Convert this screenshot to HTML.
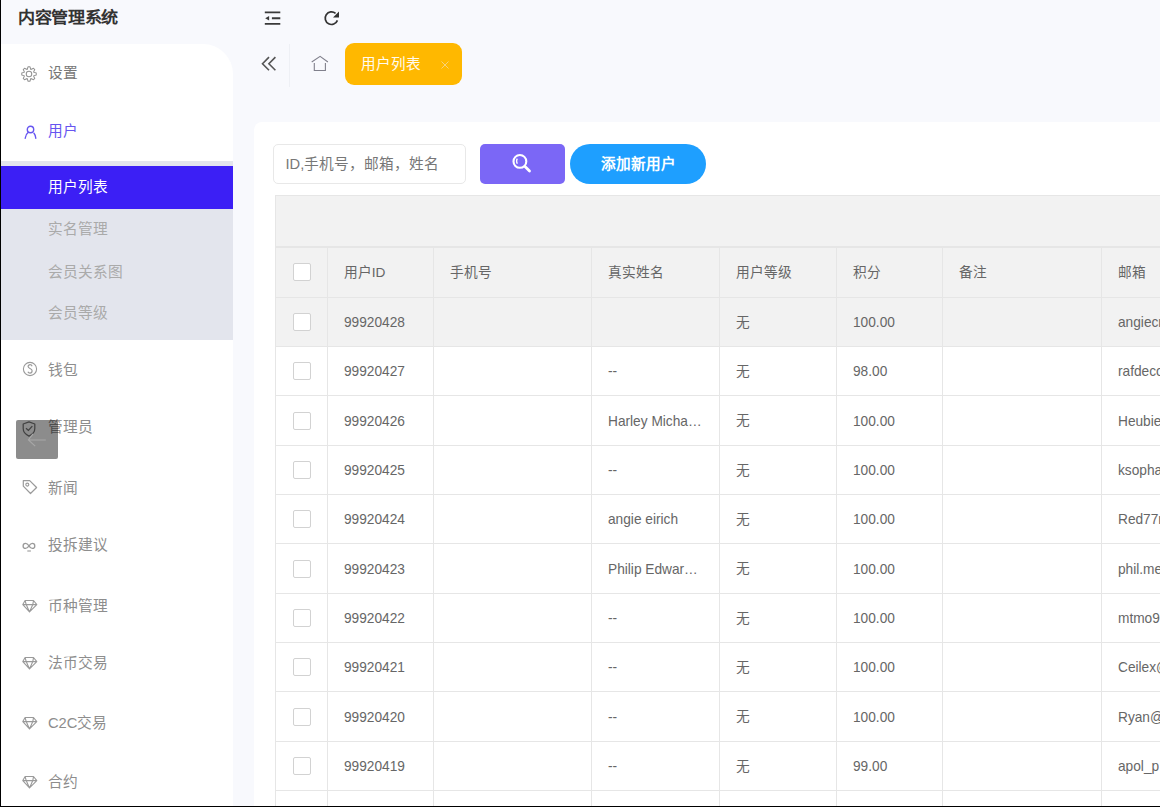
<!DOCTYPE html>
<html lang="zh-CN"><head><meta charset="utf-8"><style>
*{margin:0;padding:0;box-sizing:border-box}
html,body{width:1160px;height:807px;overflow:hidden;background:#f8f9fd;font-family:"Liberation Sans",sans-serif;position:relative}
.a{position:absolute}
.t{position:absolute;white-space:nowrap;line-height:1}
</style></head><body>

<div class="t" style="left:17.6px;top:7.7px;transform:scaleX(1.04);transform-origin:0 0;font-size:16.4px;font-weight:bold;color:#333;line-height:18px">内容管理系统</div>
<div class="a" style="left:1px;top:44.3px;width:232px;height:770px;background:#fff;border-top-right-radius:30px"></div>
<div class="a" style="left:1px;top:161.2px;width:232px;height:178.8px;background:#e3e5ed"></div>
<div class="a" style="left:1px;top:166.1px;width:232px;height:42.7px;background:#3c1ff5"></div>
<div class="t" style="left:48.3px;top:178px;font-size:14.7px;line-height:18px;color:#fff">用户列表</div>
<div class="t" style="left:48.3px;top:220.2px;font-size:14.7px;line-height:18px;color:#aaa">实名管理</div>
<div class="t" style="left:48.3px;top:262.8px;font-size:14.7px;line-height:18px;color:#aaa">会员关系图</div>
<div class="t" style="left:48.3px;top:304px;font-size:14.7px;line-height:18px;color:#aaa">会员等级</div>
<div class="a" style="left:21.2px;top:65.85px;width:16px;height:16px;line-height:0"><svg width="16" height="16" viewBox="0 0 16 16"><path d="M7.11,0.75 L8.89,0.75 L9.88,3.47 L12.49,2.25 L13.75,3.51 L12.53,6.12 L15.25,7.11 L15.25,8.89 L12.53,9.88 L13.75,12.49 L12.49,13.75 L9.88,12.53 L8.89,15.25 L7.11,15.25 L6.12,12.53 L3.51,13.75 L2.25,12.49 L3.47,9.88 L0.75,8.89 L0.75,7.11 L3.47,6.12 L2.25,3.51 L3.51,2.25 L6.12,3.47Z" fill="none" stroke="#949494" stroke-width="1.05" stroke-linejoin="round"/><circle cx="8" cy="8" r="2.75" fill="none" stroke="#949494" stroke-width="1.05"/></svg></div>
<div class="t" style="left:47.9px;top:63.5px;font-size:14.7px;line-height:18px;color:#777">设置</div>
<div class="a" style="left:23.5px;top:124.5px;width:14px;height:14px;line-height:0"><svg width="14" height="14" viewBox="0 0 14 14"><circle cx="6.5" cy="4.5" r="3.2" fill="none" stroke="#6655f0" stroke-width="1.4"/><path d="M4.3 7.3C2.7 8.5 1.5 10.5 1.2 13.3M10 8.3c1 1.2 1.6 3 1.8 5" fill="none" stroke="#6655f0" stroke-width="1.4" stroke-linecap="round"/></svg></div>
<div class="t" style="left:47.9px;top:122.19999999999999px;font-size:14.7px;line-height:18px;color:#6655f0">用户</div>
<div class="a" style="left:21.5px;top:361.4px;width:16px;height:16px;line-height:0"><svg width="16" height="16" viewBox="0 0 16 16"><circle cx="8" cy="8" r="6.6" fill="none" stroke="#9a9a9a" stroke-width="1.1"/><path d="M10.1 5.2c-.3-.9-1.1-1.5-2-1.5-1.1 0-2 .8-2 1.9 0 2.2 4 1.6 4 4.2 0 1.2-.9 2.3-2.1 2.3-1 0-1.8-.6-2.1-1.4" fill="none" stroke="#9a9a9a" stroke-width="1.2"/></svg></div>
<div class="t" style="left:47.9px;top:361px;font-size:14.7px;line-height:18px;color:#8d8d8d">钱包</div>
<div class="a" style="left:22px;top:420.8px;width:14px;height:16px;line-height:0"><svg width="14" height="16" viewBox="0 0 14 16"><path d="M7 .9l5.8 2.1v4.6c0 3.3-2.4 6-5.8 7.5C3.6 13.6 1.2 10.9 1.2 7.6V3z" fill="none" stroke="#777" stroke-width="1.25" stroke-linejoin="round"/><path d="M4 7.3l2.4 2.1 3.9-4.3" fill="none" stroke="#777" stroke-width="1.35"/></svg></div>
<div class="t" style="left:47.9px;top:418.2px;font-size:14.7px;line-height:18px;color:#8d8d8d">管理员</div>
<div class="a" style="left:21.5px;top:478.8px;width:16px;height:16px;line-height:0"><svg width="16" height="16" viewBox="0 0 16 16"><path d="M1.3 1.6h6.4l6.9 6.9-6.1 6-7.2-7.3z" fill="none" stroke="#9a9a9a" stroke-width="1.2" stroke-linejoin="round"/><circle cx="5.3" cy="5.6" r="1.5" fill="none" stroke="#9a9a9a" stroke-width="1.1"/></svg></div>
<div class="t" style="left:47.9px;top:478.5px;font-size:14.7px;line-height:18px;color:#8d8d8d">新闻</div>
<div class="a" style="left:22px;top:541.5px;width:14px;height:10px;line-height:0"><svg width="14" height="10" viewBox="0 0 14 10"><path d="M7 3.8C5.9 2.3 4.9 1.4 3.6 1.4 2.2 1.4 1.1 2.5 1.1 3.9s1.1 2.5 2.5 2.5c1.3 0 2.3-.9 3.4-2.5S8.9 1.4 10.3 1.4c1.4 0 2.5 1.1 2.5 2.5s-1.1 2.5-2.5 2.5C9 6.4 8 5.5 7 3.8z" fill="none" stroke="#9a9a9a" stroke-width="1.3"/><path d="M5.3 9h3.6" stroke="#9a9a9a" stroke-width="1.1"/></svg></div>
<div class="t" style="left:47.9px;top:535.5px;font-size:14.7px;line-height:18px;color:#8d8d8d">投拆建议</div>
<div class="a" style="left:22px;top:598.6px;width:16px;height:16px;line-height:0"><svg width="16" height="16" viewBox="0 0 16 16"><path d="M3.1 1.5h8.4l3.3 4.1L7.5 12.9.8 5.6z M.8 5.6h14 M3.1 1.5 4.2 5.6 7.5 12.9 10.8 5.6 11.5 1.5" fill="none" stroke="#9a9a9a" stroke-width="1.1" stroke-linejoin="round"/></svg></div>
<div class="t" style="left:47.9px;top:596.6px;font-size:14.7px;line-height:18px;color:#8d8d8d">币种管理</div>
<div class="a" style="left:22px;top:655.8px;width:16px;height:16px;line-height:0"><svg width="16" height="16" viewBox="0 0 16 16"><path d="M3.1 1.5h8.4l3.3 4.1L7.5 12.9.8 5.6z M.8 5.6h14 M3.1 1.5 4.2 5.6 7.5 12.9 10.8 5.6 11.5 1.5" fill="none" stroke="#9a9a9a" stroke-width="1.1" stroke-linejoin="round"/></svg></div>
<div class="t" style="left:47.9px;top:653.8px;font-size:14.7px;line-height:18px;color:#8d8d8d">法币交易</div>
<div class="a" style="left:22px;top:715.5px;width:16px;height:16px;line-height:0"><svg width="16" height="16" viewBox="0 0 16 16"><path d="M3.1 1.5h8.4l3.3 4.1L7.5 12.9.8 5.6z M.8 5.6h14 M3.1 1.5 4.2 5.6 7.5 12.9 10.8 5.6 11.5 1.5" fill="none" stroke="#9a9a9a" stroke-width="1.1" stroke-linejoin="round"/></svg></div>
<div class="t" style="left:47.9px;top:713.5px;font-size:14.7px;line-height:18px;color:#8d8d8d">C2C交易</div>
<div class="a" style="left:22px;top:775.2px;width:16px;height:16px;line-height:0"><svg width="16" height="16" viewBox="0 0 16 16"><path d="M3.1 1.5h8.4l3.3 4.1L7.5 12.9.8 5.6z M.8 5.6h14 M3.1 1.5 4.2 5.6 7.5 12.9 10.8 5.6 11.5 1.5" fill="none" stroke="#9a9a9a" stroke-width="1.1" stroke-linejoin="round"/></svg></div>
<div class="t" style="left:47.9px;top:773.2px;font-size:14.7px;line-height:18px;color:#8d8d8d">合约</div>
<div class="a" style="left:16px;top:420.3px;width:42px;height:38.5px;background:rgba(0,0,0,.45);border-radius:2px"></div>
<svg class="a" style="left:12px;top:414px" width="50" height="50" viewBox="0 0 50 50"><path d="M33.8 26H16.6M21 19.8 16.4 26l6.8 6.2" fill="none" stroke="#a8a8a8" stroke-width="1.1"/></svg>
<div class="a" style="left:0;top:0;width:1px;height:807px;background:#000"></div>
<svg class="a" style="left:264px;top:11px" width="17" height="15" viewBox="0 0 17 15"><path d="M0.8 1.45h15.5M7.9 7.25h8.4M0.8 12.9h15.5" stroke="#3a3a3a" stroke-width="1.8"/><path d="M1.2 7.25l3.9-2.2v4.4z" fill="#3a3a3a"/></svg>
<svg class="a" style="left:323px;top:10px" width="18" height="18" viewBox="0 0 18 18"><path d="M14.4 10.35A6.3 6.3 0 1 1 12.55 3.37" fill="none" stroke="#333" stroke-width="1.7"/><path d="M16 1.6v6H10z" fill="#333"/></svg>
<svg class="a" style="left:256px;top:50px" width="28" height="28" viewBox="0 0 28 28"><path d="M13 7.1 6.5 13.7 13 20.3M19.4 7.1 12.9 13.7 19.4 20.3" fill="none" stroke="#555" stroke-width="1.6"/></svg>
<div class="a" style="left:289px;top:44px;width:1px;height:43px;background:#eef0f5"></div>
<svg class="a" style="left:306px;top:50px" width="28" height="28" viewBox="0 0 28 28"><path d="M5.7 12 14.1 6.4 21.9 12M8.3 13v7.5h11.1V13" fill="none" stroke="#80808c" stroke-width="1.1"/></svg>
<div class="a" style="left:344.7px;top:43.1px;width:117px;height:42px;background:#ffb800;border-radius:9px"></div>
<div class="t" style="left:361.4px;top:54.5px;font-size:14.6px;line-height:18px;color:#fffbf0">用户列表</div>
<svg class="a" style="left:441px;top:61px" width="8" height="8" viewBox="0 0 8 8"><path d="M.5.5l7 7M7.5.5l-7 7" stroke="#f7d27a" stroke-width="1"/></svg>
<div class="a" style="left:253.6px;top:121.8px;width:1000px;height:800px;background:#fff;border-radius:8px"></div>
<div class="a" style="left:273.2px;top:144.4px;width:193px;height:39.4px;border:1px solid #e8e8e8;border-radius:5px;background:#fff"></div>
<div class="t" style="left:285.5px;top:155px;font-size:14.7px;line-height:18px;color:#777">ID,手机号，邮箱，姓名</div>
<div class="a" style="left:480.3px;top:144.4px;width:85.2px;height:39.6px;background:#7b67f6;border-radius:5px"></div>
<svg class="a" style="left:505px;top:148px" width="30" height="30" viewBox="0 0 30 30"><circle cx="14.9" cy="13.4" r="6.4" fill="none" stroke="#fff" stroke-width="2.1"/><path d="M20 18.6 24.5 23" stroke="#fff" stroke-width="2.8" stroke-linecap="round"/><path d="M12.3 10.6c-.9 1.3-.9 3.4 0 5.2" fill="none" stroke="#fff" stroke-width="1.3"/></svg>
<div class="a" style="left:569.7px;top:144.4px;width:136.3px;height:39.6px;background:#1e9fff;border-radius:20px"></div>
<div class="t" style="left:601px;top:154.5px;font-size:14.6px;line-height:18px;color:#fff;font-weight:bold">添加新用户</div>
<div class="a" style="left:275.4px;top:195.1px;width:1000px;height:52px;background:#f2f2f2;border:1px solid #e6e6e6;border-right:none"></div>
<div class="a" style="left:275.4px;top:247.1px;width:1000px;height:50.20000000000002px;background:#f2f2f2"></div>
<div class="a" style="left:275.4px;top:297.3px;width:1000px;height:49.33px;background:#f2f2f2"></div>
<div class="a" style="left:275.4px;top:246.60px;width:1000px;height:1px;background:#e6e6e6"></div>
<div class="a" style="left:275.4px;top:296.80px;width:1000px;height:1px;background:#e6e6e6"></div>
<div class="a" style="left:275.4px;top:346.13px;width:1000px;height:1px;background:#e6e6e6"></div>
<div class="a" style="left:275.4px;top:395.46px;width:1000px;height:1px;background:#e6e6e6"></div>
<div class="a" style="left:275.4px;top:444.79px;width:1000px;height:1px;background:#e6e6e6"></div>
<div class="a" style="left:275.4px;top:494.12px;width:1000px;height:1px;background:#e6e6e6"></div>
<div class="a" style="left:275.4px;top:543.45px;width:1000px;height:1px;background:#e6e6e6"></div>
<div class="a" style="left:275.4px;top:592.78px;width:1000px;height:1px;background:#e6e6e6"></div>
<div class="a" style="left:275.4px;top:642.11px;width:1000px;height:1px;background:#e6e6e6"></div>
<div class="a" style="left:275.4px;top:691.44px;width:1000px;height:1px;background:#e6e6e6"></div>
<div class="a" style="left:275.4px;top:740.77px;width:1000px;height:1px;background:#e6e6e6"></div>
<div class="a" style="left:275.4px;top:790.10px;width:1000px;height:1px;background:#e6e6e6"></div>
<div class="a" style="left:275.4px;top:839.43px;width:1000px;height:1px;background:#e6e6e6"></div>
<div class="a" style="left:274.90px;top:247.1px;width:1px;height:700px;background:#e6e6e6"></div>
<div class="a" style="left:326.90px;top:247.1px;width:1px;height:700px;background:#e6e6e6"></div>
<div class="a" style="left:432.70px;top:247.1px;width:1px;height:700px;background:#e6e6e6"></div>
<div class="a" style="left:591.10px;top:247.1px;width:1px;height:700px;background:#e6e6e6"></div>
<div class="a" style="left:718.80px;top:247.1px;width:1px;height:700px;background:#e6e6e6"></div>
<div class="a" style="left:836.00px;top:247.1px;width:1px;height:700px;background:#e6e6e6"></div>
<div class="a" style="left:942.20px;top:247.1px;width:1px;height:700px;background:#e6e6e6"></div>
<div class="a" style="left:1101.30px;top:247.1px;width:1px;height:700px;background:#e6e6e6"></div>
<div class="a" style="left:292.5px;top:263.2px;width:18px;height:18px;border:1px solid #d2d2d2;border-radius:2px;background:#fff"></div>
<div class="t" style="left:343.70px;top:263.70px;font-size:13.7px;line-height:18px;color:#666">用户ID</div>
<div class="t" style="left:449.50px;top:263.70px;font-size:13.7px;line-height:18px;color:#666">手机号</div>
<div class="t" style="left:607.90px;top:263.70px;font-size:13.7px;line-height:18px;color:#666">真实姓名</div>
<div class="t" style="left:735.60px;top:263.70px;font-size:13.7px;line-height:18px;color:#666">用户等级</div>
<div class="t" style="left:852.80px;top:263.70px;font-size:13.7px;line-height:18px;color:#666">积分</div>
<div class="t" style="left:959.00px;top:263.70px;font-size:13.7px;line-height:18px;color:#666">备注</div>
<div class="t" style="left:1118.10px;top:263.70px;font-size:13.7px;line-height:18px;color:#666">邮箱</div>
<div class="a" style="left:292.5px;top:312.96500000000003px;width:18px;height:18px;border:1px solid #d2d2d2;border-radius:2px;background:#fff"></div>
<div class="t" style="left:343.70px;top:312.87px;font-size:15.0px;line-height:18px;color:#666;transform:scaleX(0.913);transform-origin:0 50%">99920428</div>
<div class="t" style="left:735.60px;top:313.57px;font-size:13.7px;line-height:18px;color:#666">无</div>
<div class="t" style="left:852.80px;top:312.87px;font-size:15.0px;line-height:18px;color:#666;transform:scaleX(0.913);transform-origin:0 50%">100.00</div>
<div class="t" style="left:1118.10px;top:312.87px;font-size:15.0px;line-height:18px;color:#666;transform:scaleX(0.913);transform-origin:0 50%">angiecr</div>
<div class="a" style="left:292.5px;top:362.295px;width:18px;height:18px;border:1px solid #d2d2d2;border-radius:2px;background:#fff"></div>
<div class="t" style="left:343.70px;top:362.19px;font-size:15.0px;line-height:18px;color:#666;transform:scaleX(0.913);transform-origin:0 50%">99920427</div>
<div class="t" style="left:607.90px;top:362.19px;font-size:15.0px;line-height:18px;color:#666;transform:scaleX(0.913);transform-origin:0 50%">--</div>
<div class="t" style="left:735.60px;top:362.90px;font-size:13.7px;line-height:18px;color:#666">无</div>
<div class="t" style="left:852.80px;top:362.19px;font-size:15.0px;line-height:18px;color:#666;transform:scaleX(0.913);transform-origin:0 50%">98.00</div>
<div class="t" style="left:1118.10px;top:362.19px;font-size:15.0px;line-height:18px;color:#666;transform:scaleX(0.913);transform-origin:0 50%">rafdeco</div>
<div class="a" style="left:292.5px;top:411.62500000000006px;width:18px;height:18px;border:1px solid #d2d2d2;border-radius:2px;background:#fff"></div>
<div class="t" style="left:343.70px;top:411.53px;font-size:15.0px;line-height:18px;color:#666;transform:scaleX(0.913);transform-origin:0 50%">99920426</div>
<div class="t" style="left:607.90px;top:411.53px;font-size:15.0px;line-height:18px;color:#666;transform:scaleX(0.913);transform-origin:0 50%">Harley Micha…</div>
<div class="t" style="left:735.60px;top:412.23px;font-size:13.7px;line-height:18px;color:#666">无</div>
<div class="t" style="left:852.80px;top:411.53px;font-size:15.0px;line-height:18px;color:#666;transform:scaleX(0.913);transform-origin:0 50%">100.00</div>
<div class="t" style="left:1118.10px;top:411.53px;font-size:15.0px;line-height:18px;color:#666;transform:scaleX(0.913);transform-origin:0 50%">Heubie</div>
<div class="a" style="left:292.5px;top:460.95500000000004px;width:18px;height:18px;border:1px solid #d2d2d2;border-radius:2px;background:#fff"></div>
<div class="t" style="left:343.70px;top:460.86px;font-size:15.0px;line-height:18px;color:#666;transform:scaleX(0.913);transform-origin:0 50%">99920425</div>
<div class="t" style="left:607.90px;top:460.86px;font-size:15.0px;line-height:18px;color:#666;transform:scaleX(0.913);transform-origin:0 50%">--</div>
<div class="t" style="left:735.60px;top:461.56px;font-size:13.7px;line-height:18px;color:#666">无</div>
<div class="t" style="left:852.80px;top:460.86px;font-size:15.0px;line-height:18px;color:#666;transform:scaleX(0.913);transform-origin:0 50%">100.00</div>
<div class="t" style="left:1118.10px;top:460.86px;font-size:15.0px;line-height:18px;color:#666;transform:scaleX(0.913);transform-origin:0 50%">ksopha</div>
<div class="a" style="left:292.5px;top:510.28499999999997px;width:18px;height:18px;border:1px solid #d2d2d2;border-radius:2px;background:#fff"></div>
<div class="t" style="left:343.70px;top:510.18px;font-size:15.0px;line-height:18px;color:#666;transform:scaleX(0.913);transform-origin:0 50%">99920424</div>
<div class="t" style="left:607.90px;top:510.18px;font-size:15.0px;line-height:18px;color:#666;transform:scaleX(0.913);transform-origin:0 50%">angie eirich</div>
<div class="t" style="left:735.60px;top:510.88px;font-size:13.7px;line-height:18px;color:#666">无</div>
<div class="t" style="left:852.80px;top:510.18px;font-size:15.0px;line-height:18px;color:#666;transform:scaleX(0.913);transform-origin:0 50%">100.00</div>
<div class="t" style="left:1118.10px;top:510.18px;font-size:15.0px;line-height:18px;color:#666;transform:scaleX(0.913);transform-origin:0 50%">Red77r</div>
<div class="a" style="left:292.5px;top:559.615px;width:18px;height:18px;border:1px solid #d2d2d2;border-radius:2px;background:#fff"></div>
<div class="t" style="left:343.70px;top:559.51px;font-size:15.0px;line-height:18px;color:#666;transform:scaleX(0.913);transform-origin:0 50%">99920423</div>
<div class="t" style="left:607.90px;top:559.51px;font-size:15.0px;line-height:18px;color:#666;transform:scaleX(0.913);transform-origin:0 50%">Philip Edwar…</div>
<div class="t" style="left:735.60px;top:560.22px;font-size:13.7px;line-height:18px;color:#666">无</div>
<div class="t" style="left:852.80px;top:559.51px;font-size:15.0px;line-height:18px;color:#666;transform:scaleX(0.913);transform-origin:0 50%">100.00</div>
<div class="t" style="left:1118.10px;top:559.51px;font-size:15.0px;line-height:18px;color:#666;transform:scaleX(0.913);transform-origin:0 50%">phil.me</div>
<div class="a" style="left:292.5px;top:608.9449999999999px;width:18px;height:18px;border:1px solid #d2d2d2;border-radius:2px;background:#fff"></div>
<div class="t" style="left:343.70px;top:608.84px;font-size:15.0px;line-height:18px;color:#666;transform:scaleX(0.913);transform-origin:0 50%">99920422</div>
<div class="t" style="left:607.90px;top:608.84px;font-size:15.0px;line-height:18px;color:#666;transform:scaleX(0.913);transform-origin:0 50%">--</div>
<div class="t" style="left:735.60px;top:609.54px;font-size:13.7px;line-height:18px;color:#666">无</div>
<div class="t" style="left:852.80px;top:608.84px;font-size:15.0px;line-height:18px;color:#666;transform:scaleX(0.913);transform-origin:0 50%">100.00</div>
<div class="t" style="left:1118.10px;top:608.84px;font-size:15.0px;line-height:18px;color:#666;transform:scaleX(0.913);transform-origin:0 50%">mtmo9</div>
<div class="a" style="left:292.5px;top:658.275px;width:18px;height:18px;border:1px solid #d2d2d2;border-radius:2px;background:#fff"></div>
<div class="t" style="left:343.70px;top:658.17px;font-size:15.0px;line-height:18px;color:#666;transform:scaleX(0.913);transform-origin:0 50%">99920421</div>
<div class="t" style="left:607.90px;top:658.17px;font-size:15.0px;line-height:18px;color:#666;transform:scaleX(0.913);transform-origin:0 50%">--</div>
<div class="t" style="left:735.60px;top:658.88px;font-size:13.7px;line-height:18px;color:#666">无</div>
<div class="t" style="left:852.80px;top:658.17px;font-size:15.0px;line-height:18px;color:#666;transform:scaleX(0.913);transform-origin:0 50%">100.00</div>
<div class="t" style="left:1118.10px;top:658.17px;font-size:15.0px;line-height:18px;color:#666;transform:scaleX(0.913);transform-origin:0 50%">Ceilex@</div>
<div class="a" style="left:292.5px;top:707.605px;width:18px;height:18px;border:1px solid #d2d2d2;border-radius:2px;background:#fff"></div>
<div class="t" style="left:343.70px;top:707.50px;font-size:15.0px;line-height:18px;color:#666;transform:scaleX(0.913);transform-origin:0 50%">99920420</div>
<div class="t" style="left:607.90px;top:707.50px;font-size:15.0px;line-height:18px;color:#666;transform:scaleX(0.913);transform-origin:0 50%">--</div>
<div class="t" style="left:735.60px;top:708.21px;font-size:13.7px;line-height:18px;color:#666">无</div>
<div class="t" style="left:852.80px;top:707.50px;font-size:15.0px;line-height:18px;color:#666;transform:scaleX(0.913);transform-origin:0 50%">100.00</div>
<div class="t" style="left:1118.10px;top:707.50px;font-size:15.0px;line-height:18px;color:#666;transform:scaleX(0.913);transform-origin:0 50%">Ryan@</div>
<div class="a" style="left:292.5px;top:756.935px;width:18px;height:18px;border:1px solid #d2d2d2;border-radius:2px;background:#fff"></div>
<div class="t" style="left:343.70px;top:756.83px;font-size:15.0px;line-height:18px;color:#666;transform:scaleX(0.913);transform-origin:0 50%">99920419</div>
<div class="t" style="left:607.90px;top:756.83px;font-size:15.0px;line-height:18px;color:#666;transform:scaleX(0.913);transform-origin:0 50%">--</div>
<div class="t" style="left:735.60px;top:757.53px;font-size:13.7px;line-height:18px;color:#666">无</div>
<div class="t" style="left:852.80px;top:756.83px;font-size:15.0px;line-height:18px;color:#666;transform:scaleX(0.913);transform-origin:0 50%">99.00</div>
<div class="t" style="left:1118.10px;top:756.83px;font-size:15.0px;line-height:18px;color:#666;transform:scaleX(0.913);transform-origin:0 50%">apol_p</div>
<div class="a" style="left:292.5px;top:806.2649999999999px;width:18px;height:18px;border:1px solid #d2d2d2;border-radius:2px;background:#fff"></div>
<div class="t" style="left:343.70px;top:806.16px;font-size:15.0px;line-height:18px;color:#666;transform:scaleX(0.913);transform-origin:0 50%">99920418</div>
<div class="t" style="left:607.90px;top:806.16px;font-size:15.0px;line-height:18px;color:#666;transform:scaleX(0.913);transform-origin:0 50%">--</div>
<div class="t" style="left:735.60px;top:806.86px;font-size:13.7px;line-height:18px;color:#666">无</div>
<div class="t" style="left:852.80px;top:806.16px;font-size:15.0px;line-height:18px;color:#666;transform:scaleX(0.913);transform-origin:0 50%">100.00</div>
<div class="t" style="left:1118.10px;top:806.16px;font-size:15.0px;line-height:18px;color:#666;transform:scaleX(0.913);transform-origin:0 50%">x</div>
<div class="a" style="left:0;top:806px;width:1160px;height:1px;background:#000"></div>
</body></html>
